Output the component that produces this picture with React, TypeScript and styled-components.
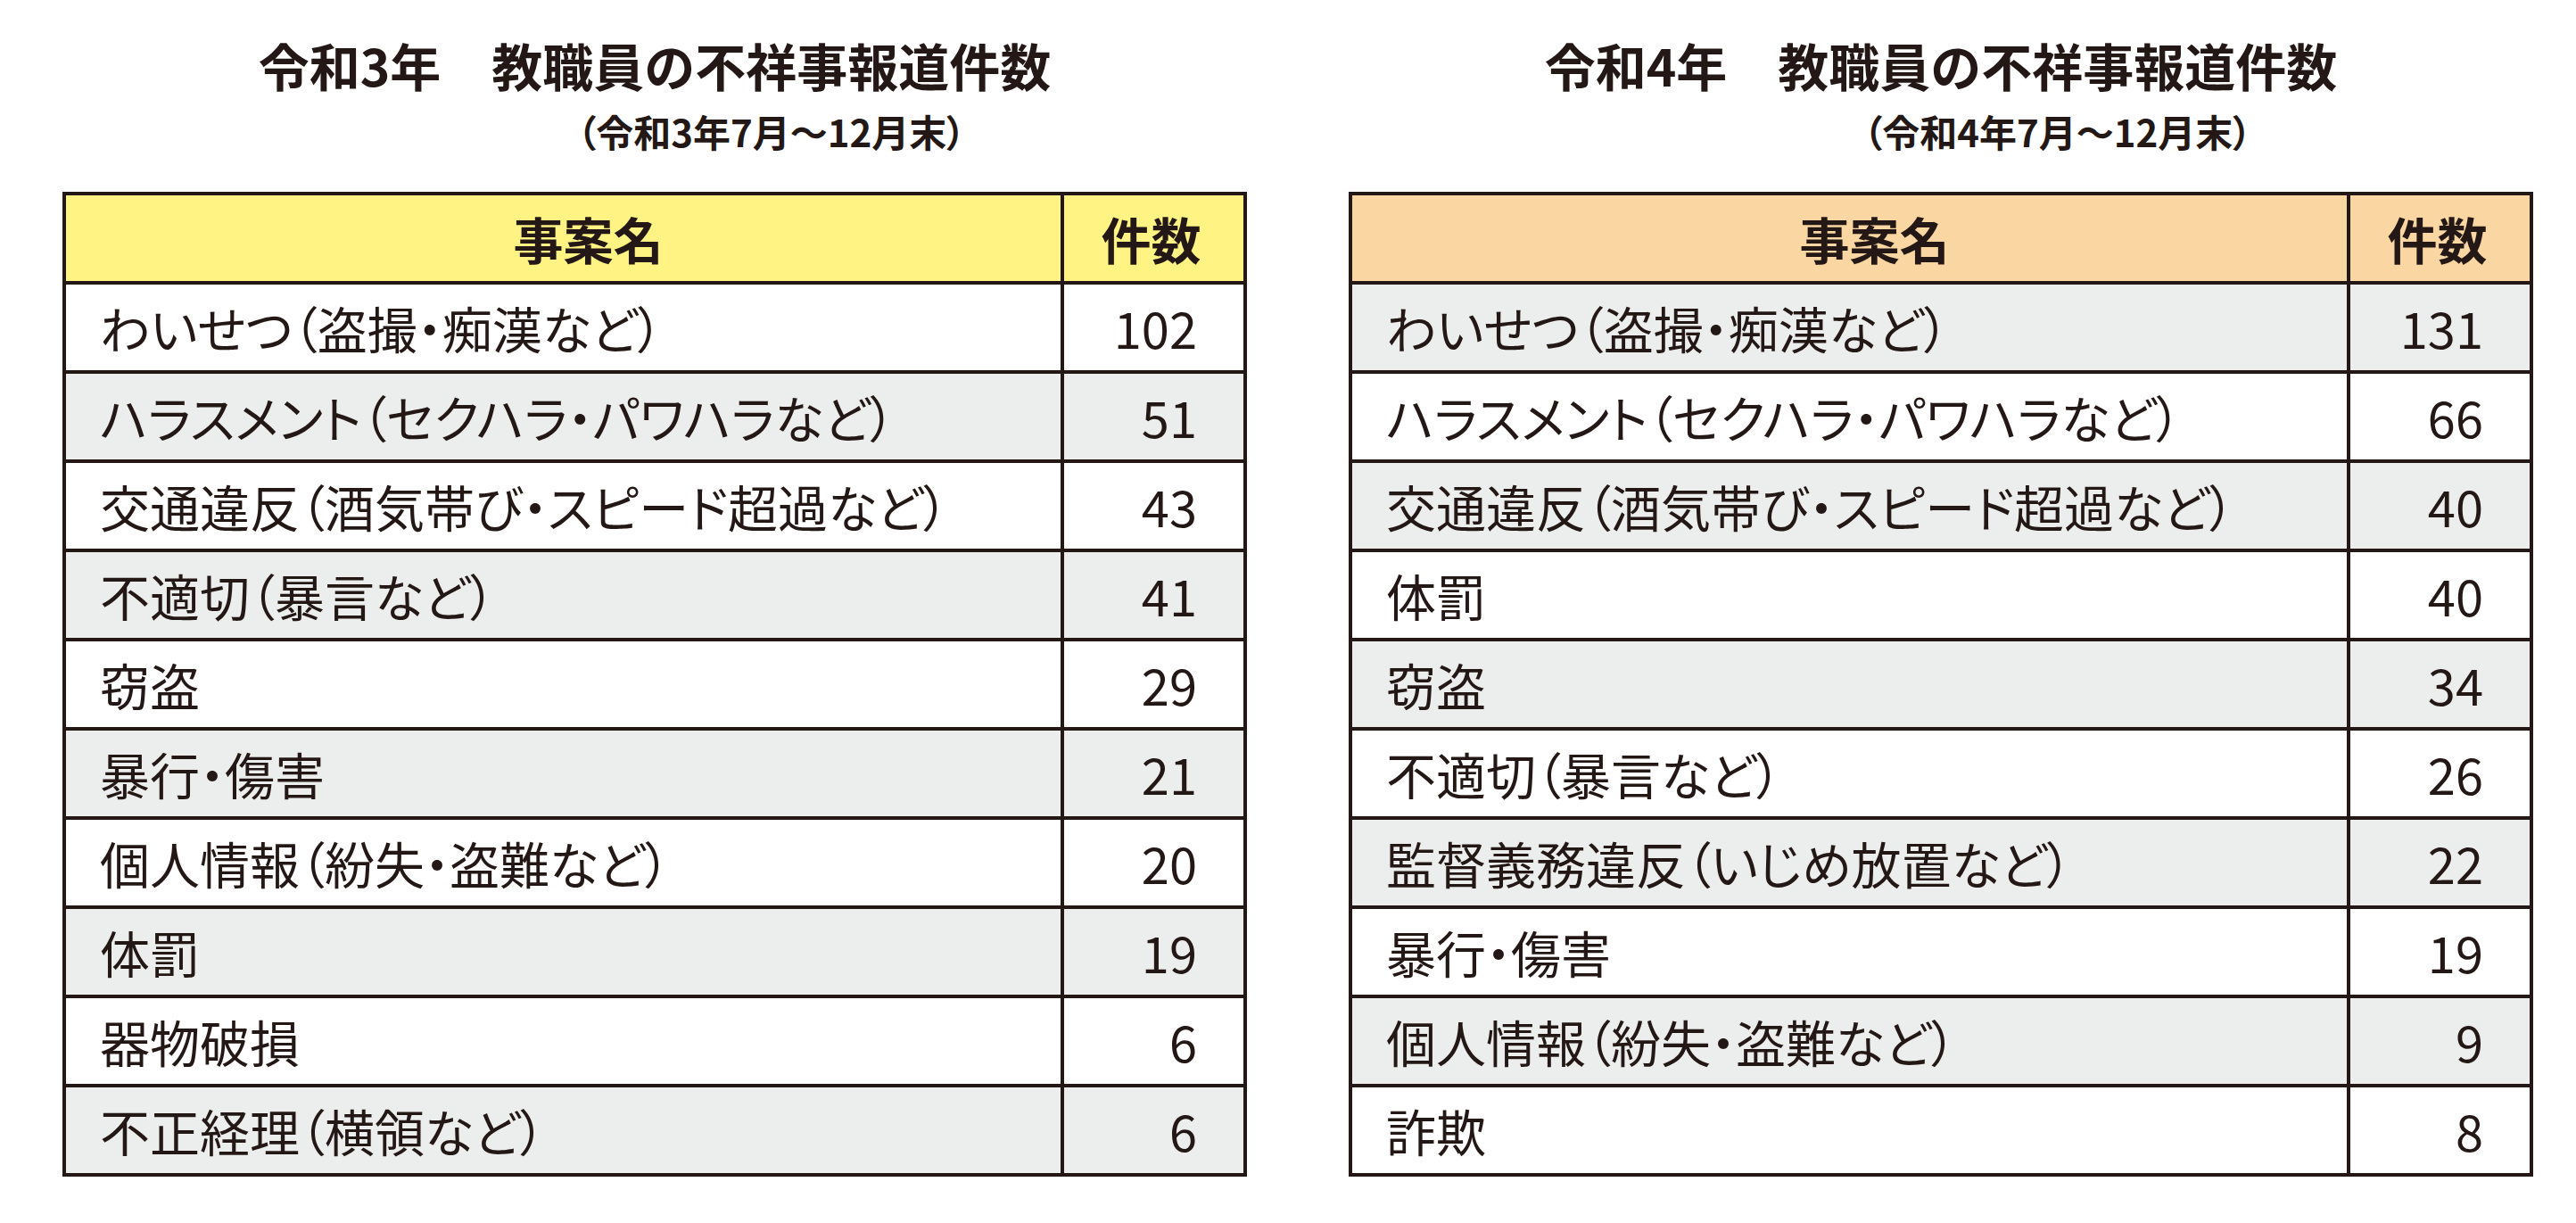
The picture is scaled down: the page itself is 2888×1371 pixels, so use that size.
import React from "react";
import styled, { createGlobalStyle } from "styled-components";

const INK = "#231815";

const GlobalStyle = createGlobalStyle`
  html, body {
    margin: 0;
    padding: 0;
    background: #ffffff;
  }
  body {
    font-family: "Noto Sans CJK JP", "Noto Sans", sans-serif;
    color: ${INK};
  }
  * {
    box-sizing: border-box;
  }
`;

const Page = styled.main`
  display: flex;
  gap: 114px;
  padding-left: 70px;
  width: 2888px;
  height: 1371px;
`;

const Panel = styled.section`
  display: flex;
  flex-direction: column;
  width: 1328px;
`;

const TitleBlock = styled.header`
  height: 215px;
  display: flex;
  justify-content: center;
  align-items: flex-start;
  padding-top: 44px;
  font-weight: 700;
`;

const TitleYear = styled.span`
  font-size: 57px;
  line-height: 1;
  white-space: pre;
`;

const TitleMainCol = styled.div`
  display: flex;
  flex-direction: column;
  align-items: center;
`;

const TitleMain = styled.span`
  font-size: 57px;
  line-height: 1;
  white-space: nowrap;
`;

const Subtitle = styled.span`
  font-size: 42px;
  line-height: 1;
  margin-top: 25px;
  white-space: nowrap;
  font-feature-settings: "palt" 1;
`;

const Table = styled.div`
  display: flex;
  flex-direction: column;
  border: 4px solid ${INK};
`;

const Row = styled.div<{ $bg: string }>`
  display: grid;
  grid-template-columns: 1fr 201px;
  background: ${(p) => p.$bg};
  & + & {
    border-top: 4px solid ${INK};
  }
`;

const Cell = styled.div`
  height: 96px;
  display: flex;
  align-items: center;
  font-size: 56px;
  line-height: 1;
  white-space: nowrap;
  font-feature-settings: "palt" 1;
`;

const NameCell = styled(Cell)`
  border-right: 4px solid ${INK};
  padding-left: 38px;
`;

const CountCell = styled(Cell)`
  justify-content: flex-end;
  padding-right: 52px;
`;

const HeadNameCell = styled(Cell)`
  border-right: 4px solid ${INK};
  justify-content: center;
  padding-left: 56px;
  font-weight: 700;
`;

const HeadCountCell = styled(Cell)`
  justify-content: center;
  padding-right: 6px;
  font-weight: 700;
`;

type Item = [string, number];

const GRAY = "#eceeed";
const WHITE = "#ffffff";

const left: Item[] = [
  ["わいせつ（盗撮・痴漢など）", 102],
  ["ハラスメント（セクハラ・パワハラなど）", 51],
  ["交通違反（酒気帯び・スピード超過など）", 43],
  ["不適切（暴言など）", 41],
  ["窃盗", 29],
  ["暴行・傷害", 21],
  ["個人情報（紛失・盗難など）", 20],
  ["体罰", 19],
  ["器物破損", 6],
  ["不正経理（横領など）", 6],
];

const right: Item[] = [
  ["わいせつ（盗撮・痴漢など）", 131],
  ["ハラスメント（セクハラ・パワハラなど）", 66],
  ["交通違反（酒気帯び・スピード超過など）", 40],
  ["体罰", 40],
  ["窃盗", 34],
  ["不適切（暴言など）", 26],
  ["監督義務違反（いじめ放置など）", 22],
  ["暴行・傷害", 19],
  ["個人情報（紛失・盗難など）", 9],
  ["詐欺", 8],
];

type PanelProps = {
  year: string;
  headColor: string;
  firstGray: boolean;
  items: Item[];
};

const ReportPanel: React.FC<PanelProps> = ({ year, headColor, firstGray, items }) => (
  <Panel>
    <TitleBlock>
      <TitleYear>{`令和${year}年　`}</TitleYear>
      <TitleMainCol>
        <TitleMain>教職員の不祥事報道件数</TitleMain>
        <Subtitle>{`（令和${year}年7月～12月末）`}</Subtitle>
      </TitleMainCol>
    </TitleBlock>
    <Table>
      <Row $bg={headColor}>
        <HeadNameCell>事案名</HeadNameCell>
        <HeadCountCell>件数</HeadCountCell>
      </Row>
      {items.map(([name, n], i) => {
        const gray = firstGray ? i % 2 === 0 : i % 2 === 1;
        return (
          <Row key={name + i} $bg={gray ? GRAY : WHITE}>
            <NameCell>{name}</NameCell>
            <CountCell>{n}</CountCell>
          </Row>
        );
      })}
    </Table>
  </Panel>
);

export default function App() {
  return (
    <>
      <GlobalStyle />
      <Page>
        <ReportPanel year="3" headColor="#fff383" firstGray={false} items={left} />
        <ReportPanel year="4" headColor="#fad7a2" firstGray={true} items={right} />
      </Page>
    </>
  );
}
